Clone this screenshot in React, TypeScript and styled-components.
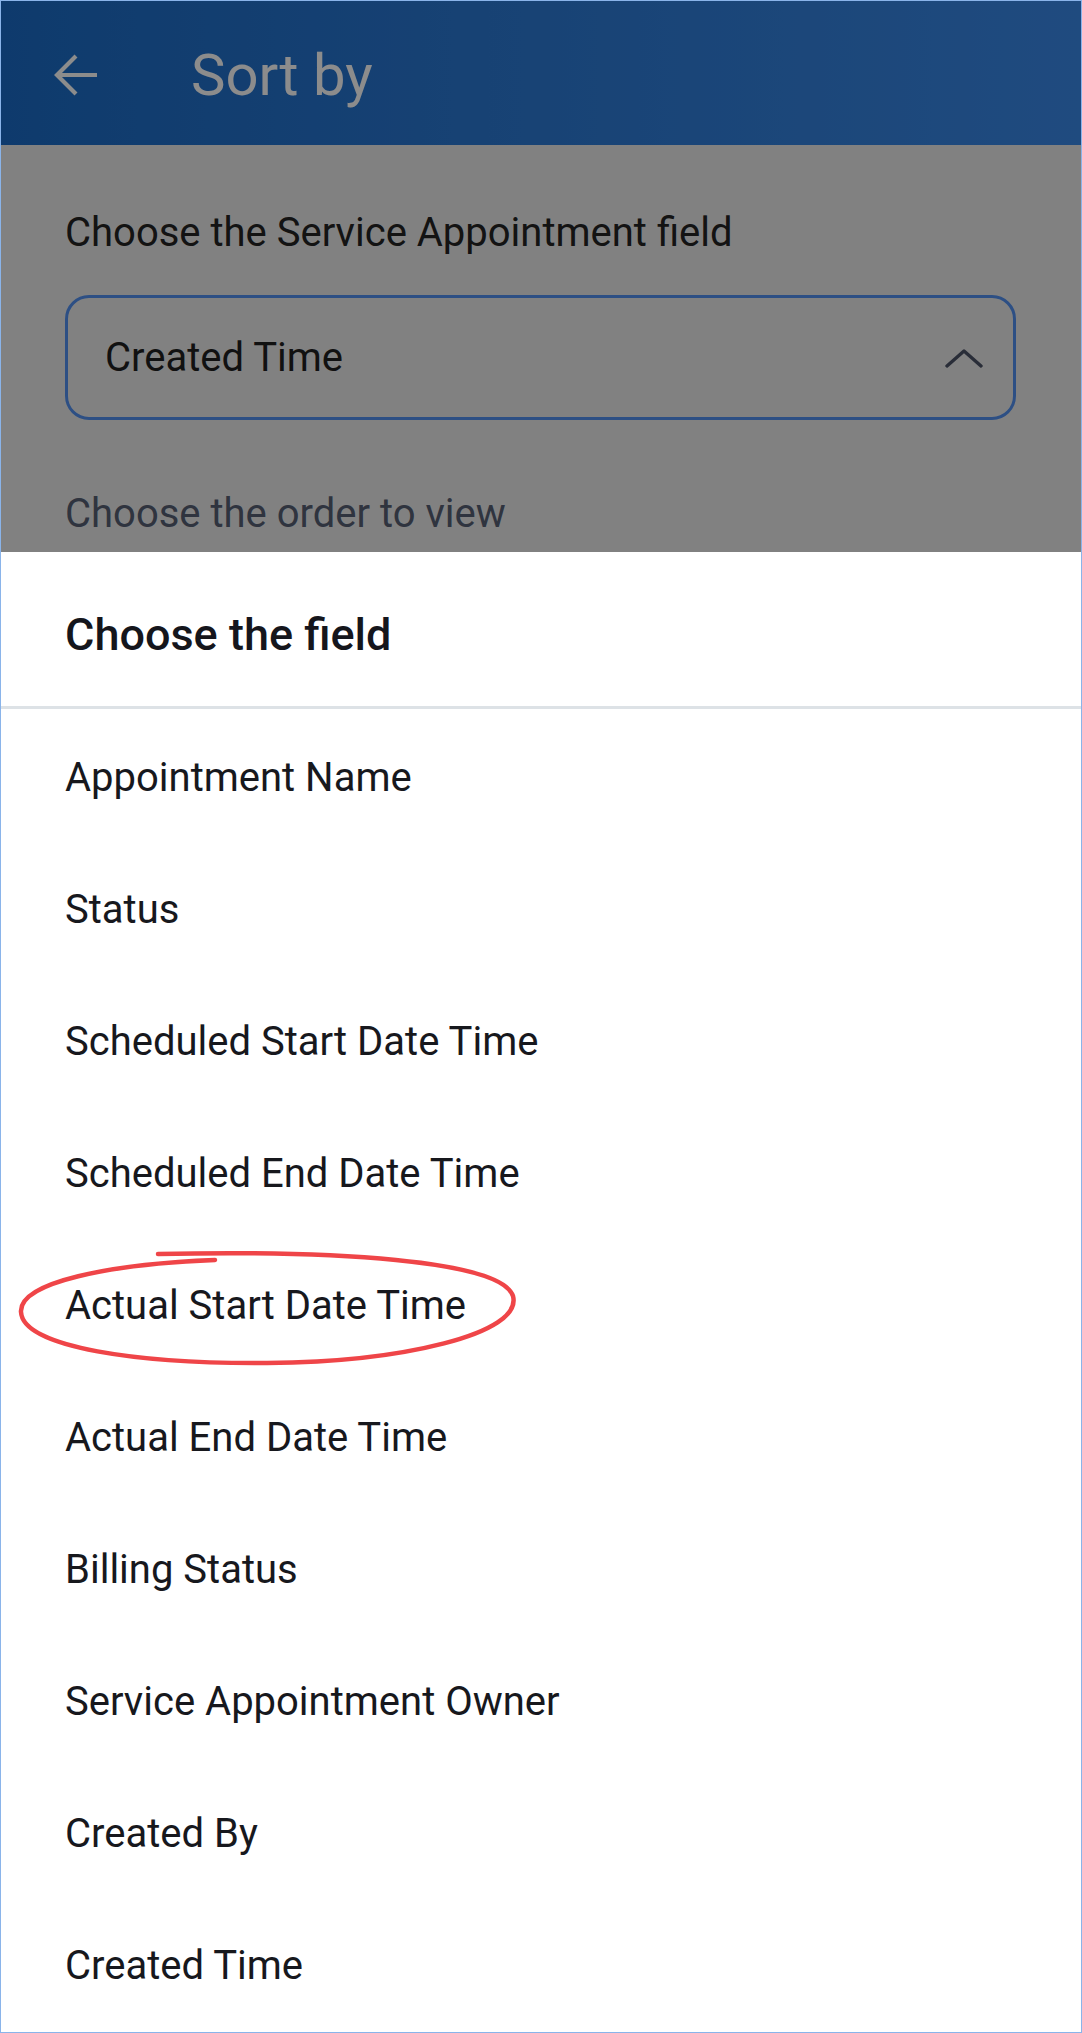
import styled, { createGlobalStyle } from 'styled-components';

const GlobalStyle = createGlobalStyle`
  html, body {
    margin: 0;
    padding: 0;
    background: #ffffff;
  }
  * {
    box-sizing: border-box;
  }
  body {
    font-family: Roboto, 'Noto Sans', 'Liberation Sans', sans-serif;
    -webkit-font-smoothing: antialiased;
  }
`;

const fields = [
  'Appointment Name',
  'Status',
  'Scheduled Start Date Time',
  'Scheduled End Date Time',
  'Actual Start Date Time',
  'Actual End Date Time',
  'Billing Status',
  'Service Appointment Owner',
  'Created By',
  'Created Time',
];

const Frame = styled.div`
  border: 1px solid #8ab4ea;
  min-height: 100vh;
  display: flex;
  flex-direction: column;
`;

const Screen = styled.div`
  position: relative;
  flex: 1;
  background: #ececec;
  overflow: hidden;
`;

const AppBar = styled.header`
  height: 144px;
  display: flex;
  align-items: center;
  padding: 3px 0 0 53px;
  gap: 93px;
  background: linear-gradient(90deg, #1b6bc6 0%, #2b79d4 45%, #3a89e8 100%);
  color: #ffffff;
`;

const BackButton = styled.button`
  border: 0;
  background: none;
  padding: 0;
  width: 44px;
  height: 44px;
  display: flex;
  color: inherit;
`;

const Title = styled.h1`
  margin: 0;
  font-size: 58px;
  font-weight: 400;
`;

const Form = styled.section`
  padding: 64px 65px 0 64px;
  display: flex;
  flex-direction: column;
`;

const FieldLabel = styled.p<{ muted?: boolean }>`
  margin: 0;
  font-size: 40px;
  font-weight: 400;
  color: ${({ muted }) => (muted ? '#575f74' : '#242424')};
`;

const Select = styled.div`
  margin: 39px 0 70px;
  height: 125px;
  border: 3px solid #5291f0;
  border-radius: 24px;
  display: flex;
  align-items: center;
  justify-content: space-between;
  padding: 0 30px 0 37px;
`;

const SelectValue = styled.span`
  font-size: 40px;
  color: #1f1f1f;
`;

const Scrim = styled.div`
  position: absolute;
  inset: 0;
  background: rgba(0, 0, 0, 0.45);
`;

const Sheet = styled.div`
  position: absolute;
  left: 0;
  right: 0;
  bottom: 0;
  background: #ffffff;
`;

const SheetTitle = styled.h2`
  margin: 0;
  height: 157px;
  padding: 56px 0 0 64px;
  font-size: 45px;
  font-weight: 500;
  line-height: normal;
  color: #15161c;
  border-bottom: 3px solid #dde2e6;
`;

const OptionList = styled.ul`
  list-style: none;
  margin: 0;
  padding: 3px 0 0;
`;

const OptionRow = styled.li`
  position: relative;
  height: 132px;
  line-height: 132px;
  padding-left: 64px;
  font-size: 40px;
  color: #17181d;
`;

const Highlight = styled.svg`
  position: absolute;
  left: 0;
  top: 0;
  pointer-events: none;
`;

const BackArrow = () => (
  <svg width="44" height="44" viewBox="0 0 44 44" fill="none">
    <path
      d="M3 22H43M22 3L3 22L22 41"
      stroke="currentColor"
      strokeWidth="4.2"
      strokeLinejoin="miter"
    />
  </svg>
);

const ChevronUp = () => (
  <svg width="38" height="20" viewBox="0 0 38 20" fill="none">
    <path
      d="M2 18L19 3L36 18"
      stroke="#4c5366"
      strokeWidth="3.4"
      strokeLinecap="round"
      strokeLinejoin="round"
    />
  </svg>
);

const CircleMark = () => (
  <Highlight width="540" height="132" viewBox="0 0 540 132" fill="none">
    <path
      d="M157 14 C330 10 500 20 512 56 C522 94 400 122 266 123 C140 124 22 108 20 72 C18 42 110 24 214 20"
      stroke="#ef4548"
      strokeWidth="4.5"
      strokeLinecap="round"
    />
  </Highlight>
);

export default function App() {
  return (
    <>
      <GlobalStyle />
      <Frame>
        <Screen>
          <AppBar>
            <BackButton aria-label="Back">
              <BackArrow />
            </BackButton>
            <Title>Sort by</Title>
          </AppBar>
          <Form>
            <FieldLabel>Choose the Service Appointment field</FieldLabel>
            <Select>
              <SelectValue>Created Time</SelectValue>
              <ChevronUp />
            </Select>
            <FieldLabel muted>Choose the order to view</FieldLabel>
          </Form>
          <Scrim />
          <Sheet>
            <SheetTitle>Choose the field</SheetTitle>
            <OptionList>
              {fields.map((field) => (
                <OptionRow key={field}>
                  {field}
                  {field === 'Actual Start Date Time' && <CircleMark />}
                </OptionRow>
              ))}
            </OptionList>
          </Sheet>
        </Screen>
      </Frame>
    </>
  );
}
